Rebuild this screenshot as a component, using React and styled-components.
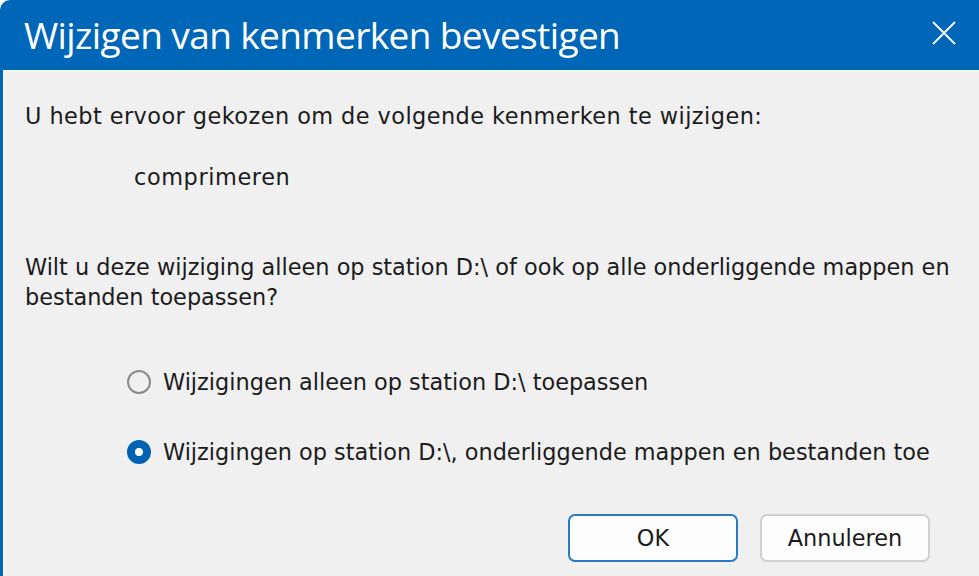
import React from "react";
import styled, { createGlobalStyle } from "styled-components";

const GlobalStyle = createGlobalStyle`
  html, body {
    margin: 0;
    padding: 0;
    background: #ffffff;
    overflow: hidden;
  }
`;

const Window = styled.div`
  width: 979px;
  height: 576px;
  box-sizing: border-box;
  display: flex;
  flex-direction: column;
  background: #0067b8;
  border-top-left-radius: 10px;
  padding-left: 3px;
  overflow: hidden;
`;

const TitleBar = styled.div`
  height: 70px;
  flex: none;
  display: flex;
  align-items: center;
  justify-content: space-between;
  padding: 0 20px 0 21px;
  color: #ffffff;
`;

const Title = styled.h1`
  margin: 0;
  font-family: "Open Sans", "Noto Sans", sans-serif;
  font-weight: 400;
  font-size: 37px;
  letter-spacing: -0.6px;
  padding-bottom: 2px;
`;

const CloseButton = styled.button`
  border: none;
  background: transparent;
  padding: 0;
  width: 30px;
  height: 30px;
  display: flex;
  align-items: center;
  justify-content: center;
  margin-top: -5px;
`;

const Body = styled.div`
  flex: 1;
  background: #f0f0f0;
  border-top: 2px solid #f7f9fc;
  border-left: 1px solid #ffffff;
  padding: 0 0 0 21px;
  display: flex;
  flex-direction: column;
  font-family: "DejaVu Sans", sans-serif;
  font-size: 22.4px;
  color: #1b1b1b;
`;

const Text = styled.p`
  margin: ${(p) => p.top}px 0 0 ${(p) => p.indent || 0}px;
  line-height: 30px;
  letter-spacing: ${(p) => p.spacing || 0}px;
`;

const Options = styled.div`
  display: flex;
  flex-direction: column;
  gap: 40px;
  margin: 55px 0 0 102px;
`;

const Option = styled.label`
  display: flex;
  align-items: center;
  gap: 12px;
  line-height: 30px;
`;

const Radio = styled.span`
  width: 24px;
  height: 24px;
  box-sizing: border-box;
  border-radius: 50%;
  flex: none;
  border: ${(p) => (p.checked ? "8px solid #0063b1" : "2px solid #8a8a8a")};
  background: ${(p) => (p.checked ? "#ffffff" : "transparent")};
`;

const ButtonRow = styled.div`
  display: flex;
  justify-content: flex-end;
  gap: 22px;
  margin-top: 47px;
  padding-right: 49px;
`;

const Button = styled.button`
  width: 170px;
  height: 48px;
  box-sizing: border-box;
  border-radius: 7px;
  background: #fdfdfd;
  font-family: "DejaVu Sans", sans-serif;
  font-size: 22.4px;
  color: #1b1b1b;
  border: ${(p) => (p.primary ? "2px solid #2b79c2" : "2px solid #d0d0d0")};
`;

export default function App() {
  return (
    <>
      <GlobalStyle />
      <Window>
        <TitleBar>
          <Title>Wijzigen van kenmerken bevestigen</Title>
          <CloseButton aria-label="Sluiten">
            <svg width="26" height="26" viewBox="0 0 26 26">
              <path d="M2 2 L24 24 M24 2 L2 24" stroke="#ffffff" strokeWidth="1.8" fill="none" />
            </svg>
          </CloseButton>
        </TitleBar>
        <Body>
          <Text top={29} spacing={0.45}>U hebt ervoor gekozen om de volgende kenmerken te wijzigen:</Text>
          <Text top={31} indent={109} spacing={0.6}>comprimeren</Text>
          <Text top={60}>
            Wilt u deze wijziging alleen op station D:\ of ook op alle onderliggende mappen en
            <br />
            bestanden toepassen?
          </Text>
          <Options>
            <Option>
              <Radio />
              Wijzigingen alleen op station D:\ toepassen
            </Option>
            <Option>
              <Radio checked />
              Wijzigingen op station D:\, onderliggende mappen en bestanden toe
            </Option>
          </Options>
          <ButtonRow>
            <Button primary>OK</Button>
            <Button>Annuleren</Button>
          </ButtonRow>
        </Body>
      </Window>
    </>
  );
}
